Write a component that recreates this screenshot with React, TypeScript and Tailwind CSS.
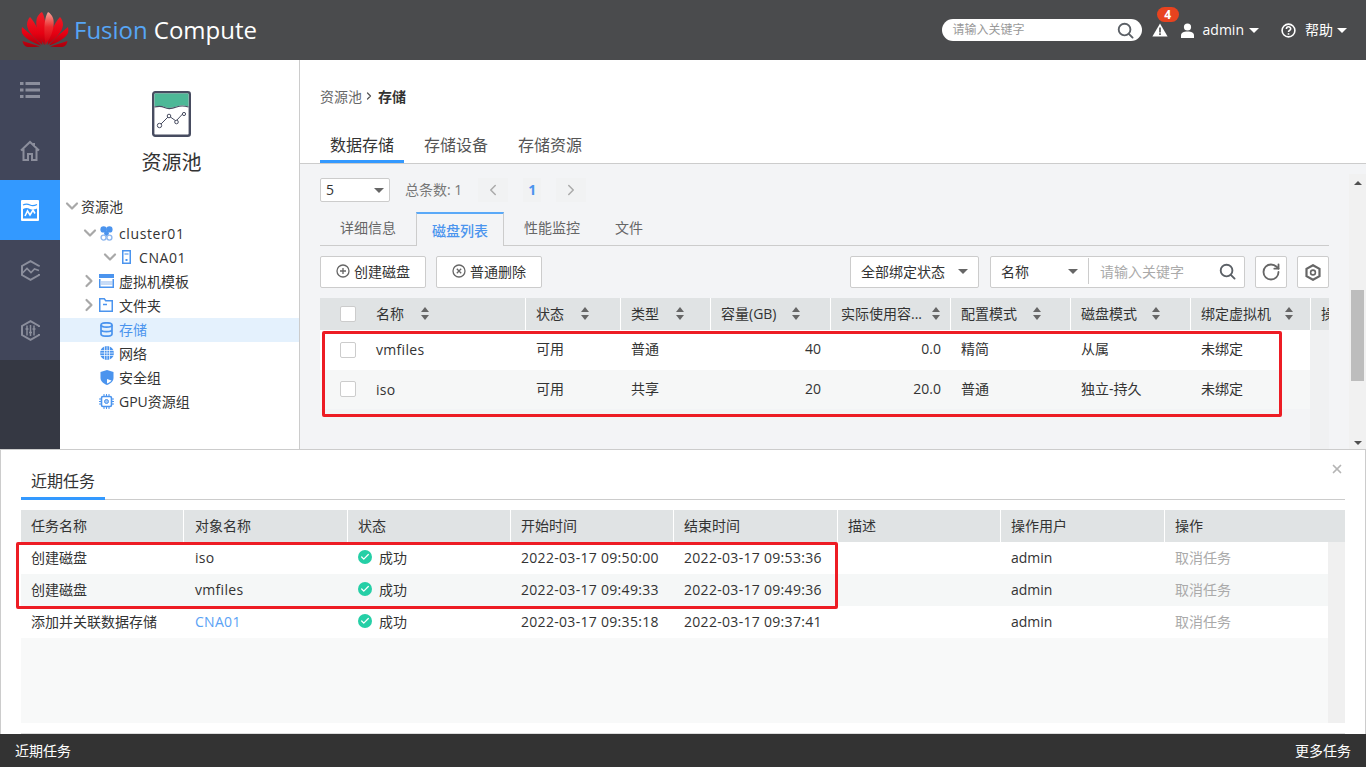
import type { ReactNode } from 'react';
import { Check, ChevronDown, ChevronLeft, ChevronRight, RotateCw, X } from 'lucide-react';

const font = "font-['Open_Sans','Noto_Sans_CJK_SC',sans-serif]";

function Caret({ className = 'border-t-[#666]' }: { className?: string }) {
  return <span className={`inline-block h-0 w-0 shrink-0 border-x-[5px] border-t-[5px] border-x-transparent ${className}`} />;
}

function SortIcon({ className = '' }: { className?: string }) {
  return (
    <span className={`flex shrink-0 flex-col gap-[3px] ${className}`}>
      <span className="h-0 w-0 border-x-[4px] border-b-[5px] border-x-transparent border-b-[#666]" />
      <span className="h-0 w-0 border-x-[4px] border-t-[5px] border-x-transparent border-t-[#666]" />
    </span>
  );
}

function SearchIcon({ color, size = 18 }: { color: string; size?: number }) {
  return (
    <svg width={size} height={size} viewBox="0 0 18 18" fill="none" stroke={color} strokeWidth="2">
      <circle cx="8" cy="8" r="6.2" />
      <path d="M12.5 12.5 16.5 16.5" strokeLinecap="round" />
    </svg>
  );
}

function HuaweiLogo() {
  const petals = [
    'M21.5 33 C14 27 6.5 20 6 13 C6 10 7 7 9 5 C14 10 20 22 21.5 33Z',
    'M20 33.5 C12 31 3 26 1 21 C0.5 19 0.5 17 1 15 C7 20 16 28 20 33.5Z',
    'M19 34.5 C13 35 7 35.5 5 34.5 C3.5 34 2 32 1.5 29 Q11 32 19 34.5Z',
  ];
  const inner = 'M23.5 33 C17 24 14.5 15 15.5 8 C16 4 19 1 21 0 C24 5 26 14 23.5 33Z';
  return (
    <svg width="48" height="36" viewBox="0 0 48 36">
      <defs>
        <linearGradient id="petal" gradientUnits="userSpaceOnUse" x1="0" y1="0" x2="0" y2="36">
          <stop offset="0" stopColor="#f0202a" />
          <stop offset="0.6" stopColor="#e60012" />
          <stop offset="1" stopColor="#a3000c" />
        </linearGradient>
        <linearGradient id="petalTop" gradientUnits="userSpaceOnUse" x1="0" y1="0" x2="0" y2="30">
          <stop offset="0" stopColor="#f7a498" />
          <stop offset="0.5" stopColor="#ec2a2e" />
          <stop offset="1" stopColor="#d6000f" />
        </linearGradient>
      </defs>
      {petals.map((d) => (
        <path key={d} d={d} fill="url(#petal)" />
      ))}
      <path d={inner} fill="url(#petal)" />
      <g transform="translate(48 0) scale(-1 1)">
        {petals.map((d) => (
          <path key={d} d={d} fill="url(#petal)" />
        ))}
        <path d={inner} fill="url(#petalTop)" />
      </g>
    </svg>
  );
}

function Header() {
  return (
    <header className="flex h-[60px] shrink-0 items-center bg-[#4a4b4d] pl-[21px] pr-[19px] text-white">
      <HuaweiLogo />
      <span className="ml-[5px] text-[24px] leading-none">
        <span className="text-[#56a5f5]">Fusion</span>
        <span className="ml-[6px]">Compute</span>
      </span>
      <div className="ml-auto flex h-[22px] w-[200px] items-center rounded-[11px] bg-white pl-[11px] pr-[8px]">
        <span className="text-[12px] text-[#999]">请输入关键字</span>
        <span className="ml-auto"><SearchIcon color="#5b6066" size={17} /></span>
      </div>
      <div className="relative ml-[10px] flex h-[20px] w-[16px] items-center justify-center">
        <svg width="16" height="14" viewBox="0 0 16 14">
          <path d="M8 0.5 15.6 13.5H0.4Z" fill="#fff" />
          <path d="M7.2 4.5h1.6v5H7.2zM7.2 10.3h1.6v1.6H7.2z" fill="#4a4b4d" />
        </svg>
        <span className="absolute -top-[13px] left-[5px] flex h-[15px] w-[22px] items-center justify-center rounded-full bg-[#e8431f] text-[12px] font-bold leading-none">4</span>
      </div>
      <svg className="ml-[12px]" width="15" height="15" viewBox="0 0 15 15" fill="#fff">
        <circle cx="7.5" cy="4" r="3.6" />
        <path d="M1 15v-2.4C1 10 3.5 8.6 7.5 8.6S14 10 14 12.6V15Z" />
      </svg>
      <span className="ml-[8px] pb-[2px] text-[14px]">admin</span>
      <Caret className="ml-[5px] border-t-white" />
      <svg className="ml-[22px]" width="15" height="15" viewBox="0 0 15 15" fill="none" stroke="#fff" strokeWidth="1.6">
        <circle cx="7.5" cy="7.5" r="6.4" />
        <path d="M5.4 6c0-3 4.3-2.8 4.3-.3 0 1.6-2.2 1.6-2.2 3.2" />
        <path d="M7.5 10.2v1.5" />
      </svg>
      <span className="ml-[9px] pb-[2px] text-[14px]">帮助</span>
      <Caret className="ml-[4px] border-t-white" />
    </header>
  );
}

function RailIcon({ name, color }: { name: string; color: string }) {
  if (name === 'list')
    return (
      <svg width="20" height="16" viewBox="0 0 20 16" fill={color}>
        <path d="M0 0h3.5v3H0zM5.5 0H20v3H5.5zM0 6.5h3.5v3H0zM5.5 6.5H20v3H5.5zM0 13h3.5v3H0zM5.5 13H20v3H5.5z" />
      </svg>
    );
  if (name === 'home')
    return (
      <svg width="20" height="21" viewBox="0 0 20 21" fill="none" stroke={color} strokeWidth="2">
        <path d="M1 10.5 10 2l9 8.5M3.5 9v11h4.5v-6h4v6h4.5V9M14 3v3" />
      </svg>
    );
  if (name === 'pool')
    return (
      <svg width="18" height="21" viewBox="0 0 18 21">
        <rect width="18" height="21" rx="1" fill="#fff" />
        <path d="M2 9c3-1.5 5-1 7 0s5 .5 7-.5V18.5H2Z" fill="#3399ff" />
        <path d="M2 5c3-1.5 5-1 7 0s5 .5 7-.5" fill="none" stroke="#3399ff" strokeWidth="1.2" />
        <path d="M4 16l2.5-5 2.5 4 3-5 2 3.5" fill="none" stroke="#fff" strokeWidth="1.6" />
      </svg>
    );
  if (name === 'hexwave')
    return (
      <svg width="19" height="21" viewBox="0 0 19 21" fill="none" stroke={color} strokeWidth="2">
        <path d="M18 6.5V6L9.5 1.2 1 6v9l8.5 4.8L18 15v-1" />
        <path d="M1.5 13 6 8.5l4 4 3.5-3.500 4.500 1.500" strokeWidth="1.7" />
      </svg>
    );
  return (
    <svg width="19" height="21" viewBox="0 0 19 21" fill="none" stroke={color} strokeWidth="2">
      <path d="M18 7V6L9.5 1.2 1 6v9l8.5 4.8L18 15v-1" />
      <path d="M6 5.5v10M9.5 5v11M13 5.5v10" strokeWidth="1.5" />
      <path d="M4.5 9h3M8 12.5h3M11.5 9h3" strokeWidth="1.3" />
    </svg>
  );
}

function Rail() {
  const items = ['list', 'home', 'pool', 'hexwave', 'hexbars'];
  return (
    <nav className="flex w-[60px] shrink-0 flex-col bg-[#353843]">
      {items.map((name) => (
        <div
          key={name}
          className={`flex h-[60px] items-center justify-center ${name === 'pool' ? 'bg-[#3399ff]' : 'bg-[#41465a]'}`}
        >
          <RailIcon name={name} color="#8b8e9c" />
        </div>
      ))}
    </nav>
  );
}

function PoolIllustration() {
  return (
    <svg width="39" height="46" viewBox="0 0 39 46">
      <rect x="1.2" y="1.2" width="36.6" height="43.6" rx="2" fill="#fff" stroke="#474c60" strokeWidth="2.4" />
      <path d="M2.5 2.5h34v13c-5-1.5-8-1.5-12 0s-9 2-12 .5-7-1-10-.5Z" fill="#4db897" />
      <path d="M2.5 16c4-1 7-1 10 .5s8 1 12-.5 7-1.5 12 0" fill="none" stroke="#474c60" strokeWidth="1.2" />
      <path d="M8 34l9-9 7 5 8-8.5" fill="none" stroke="#474c60" />
      <circle cx="7.5" cy="34.5" r="2.2" fill="#fff" stroke="#474c60" />
      <circle cx="17" cy="25" r="1.8" fill="#fff" stroke="#474c60" />
      <circle cx="24.5" cy="31" r="1.8" fill="#fff" stroke="#474c60" />
      <circle cx="32" cy="23" r="1.6" fill="#fff" stroke="#474c60" />
    </svg>
  );
}

function TreeIcon({ name }: { name: string }) {
  const c = '#4b94ee';
  switch (name) {
    case 'cluster':
      return (
        <svg width="13" height="15" viewBox="0 0 13 15" fill="none" stroke="#8fb8ee" strokeWidth="1.4">
          <circle cx="3.6" cy="3.4" r="3.2" fill={c} stroke="none" />
          <circle cx="9.4" cy="3.4" r="3.2" fill={c} stroke="none" />
          <circle cx="6.5" cy="7.5" r="2.4" fill={c} stroke="none" />
          <circle cx="3.6" cy="11.6" r="2.5" />
          <circle cx="9.4" cy="11.6" r="2.5" />
        </svg>
      );
    case 'host':
      return (
        <svg width="9" height="14" viewBox="0 0 9 14">
          <rect x="0.75" y="0.75" width="7.5" height="12.5" fill="#fff" stroke={c} strokeWidth="1.5" />
          <rect x="2.5" y="3" width="4" height="2" fill="#9cc4f4" />
          <rect x="3.5" y="9" width="2" height="2" fill={c} />
        </svg>
      );
    case 'template':
      return (
        <svg width="15" height="14" viewBox="0 0 15 14">
          <rect width="15" height="4" fill={c} />
          <path d="M.75 5v8.25h13.5V5" fill="none" stroke={c} strokeWidth="1.5" />
          <path d="M3 7v4M5 7v4M7 7v4M9 7v4M11 7v4M13 7v4" stroke="#8fb8ee" />
        </svg>
      );
    case 'folder':
      return (
        <svg width="14" height="14" viewBox="0 0 14 14" fill="none" stroke={c} strokeWidth="1.5">
          <path d="M.75 .75h4.5l1.5 2h6.5v10.5H.75Z" />
          <path d="M4 6.5h4" />
        </svg>
      );
    case 'storage':
      return (
        <svg width="13" height="15" viewBox="0 0 13 15" fill="none" stroke={c} strokeWidth="1.7">
          <ellipse cx="6.5" cy="3" rx="5.5" ry="2.2" />
          <path d="M1 3v9c0 1.2 2.5 2.2 5.5 2.2S12 13.2 12 12V3M1 7.5c0 1.2 2.5 2.2 5.5 2.2S12 8.700 12 7.500" />
        </svg>
      );
    case 'network':
      return (
        <svg width="14" height="14" viewBox="0 0 14 14" fill="none" stroke="#fff" strokeWidth="0.7">
          <circle cx="7" cy="7" r="7" fill={c} stroke="none" />
          <path d="M0 4.5h14M0 7h14M0 9.5h14M4.5 0v14M7 0v14M9.5 0v14" />
        </svg>
      );
    case 'shield':
      return (
        <svg width="14" height="15" viewBox="0 0 14 15">
          <path d="M7 0 13.5 2v6c0 3.5-3 5.5-6.5 7C3.5 13.5.5 11.5.5 8V2Z" fill={c} />
          <path d="M7 4.5V9l4.5 1.5c-1 1.2-2.7 2.3-4.5 3Z" fill="#fff" />
        </svg>
      );
    default:
      return (
        <svg width="15" height="15" viewBox="0 0 15 15" fill="none" stroke={c}>
          <rect x="2.5" y="2.5" width="10" height="10" rx="1.5" fill="#fff" strokeWidth="1.6" />
          <circle cx="7.5" cy="7.5" r="2" fill="#9cc4f4" />
          <path d="M5 0v2M7.5 0v2M10 0v2M5 13v2M7.5 13v2M10 13v2M0 5h2M0 7.5h2M0 10h2M13 5h2M13 7.5h2M13 10h2" />
        </svg>
      );
  }
}

function TreeArrow({ open }: { open: boolean }) {
  const Icon = open ? ChevronDown : ChevronRight;
  return (
    <span className="flex w-[14px] shrink-0 justify-center">
      <Icon size={20} strokeWidth={2.6} className="shrink-0 text-[#a8a8a8]" />
    </span>
  );
}

const treeRows = [
  { label: 'cluster01', icon: 'cluster', open: true, pad: 'pl-[23px]', iconGap: 'ml-[3px]', gap: 'ml-[6px] tracking-[0.6px]' },
  { label: 'CNA01', icon: 'host', open: true, pad: 'pl-[43px]', iconGap: 'ml-[5px]', gap: 'ml-[8px] tracking-[0.6px]' },
  { label: '虚拟机模板', icon: 'template', open: false, pad: 'pl-[22px]', iconGap: 'ml-[3px]', gap: 'ml-[5px]' },
  { label: '文件夹', icon: 'folder', open: false, pad: 'pl-[22px]', iconGap: 'ml-[3px]', gap: 'ml-[6px]' },
  { label: '存储', icon: 'storage', pad: 'pl-[40px]', gap: 'ml-[6px]', active: true },
  { label: '网络', icon: 'network', pad: 'pl-[40px]', gap: 'ml-[5px]' },
  { label: '安全组', icon: 'shield', pad: 'pl-[40px]', gap: 'ml-[5px]' },
  { label: 'GPU资源组', icon: 'gpu', pad: 'pl-[39px]', gap: 'ml-[5px]' },
];

function TreePanel() {
  return (
    <aside className="flex w-[240px] shrink-0 flex-col border-r border-[#ccc] bg-white text-[14px] text-[#333]">
      <div className="flex flex-col items-center pr-[16px] pt-[31px]">
        <PoolIllustration />
        <div className="mt-[12px] text-[20px] leading-[28px]">资源池</div>
      </div>
      <div className="mt-[17px] flex h-[28px] items-center pb-[4px] pl-[5px]">
        <TreeArrow open />
        <span className="ml-[2px]">资源池</span>
      </div>
      {treeRows.map((row) => (
        <div key={row.label} className={`flex h-[24px] items-center pb-[2px] ${row.pad} ${row.active ? 'bg-[#e4f1fd] text-[#4b94ee]' : ''}`}>
          {row.open !== undefined && <TreeArrow open={row.open} />}
          <span className={`flex ${row.iconGap ?? ''}`}>
            <TreeIcon name={row.icon} />
          </span>
          <span className={row.gap}>{row.label}</span>
        </div>
      ))}
    </aside>
  );
}

function Toolbutton({ children, className = 'justify-center' }: { children: ReactNode; className?: string }) {
  return (
    <div className={`flex h-[32px] items-center rounded-[2px] border border-[#ccc] bg-white ${className}`}>
      {children}
    </div>
  );
}

const diskCols = [
  { label: '状态', w: 'w-[95px]', sort: 'ml-[17px]' },
  { label: '类型', w: 'w-[90px]', sort: 'ml-[17px]' },
  { label: '容量(GB)', w: 'w-[120px]', sort: 'ml-[16px]' },
  { label: '实际使用容...', w: 'w-[120px]', sort: 'ml-[10px]' },
  { label: '配置模式', w: 'w-[120px]', sort: 'ml-[16px]' },
  { label: '磁盘模式', w: 'w-[120px]', sort: 'ml-[15px]' },
  { label: '绑定虚拟机', w: 'w-[120px]', sort: 'ml-[14px]' },
];

const diskRows = [
  { name: 'vmfiles', state: '可用', type: '普通', cap: '40', used: '0.0', conf: '精简', mode: '从属', bind: '未绑定' },
  { name: 'iso', state: '可用', type: '共享', cap: '20', used: '20.0', conf: '普通', mode: '独立-持久', bind: '未绑定' },
];

function Checkbox() {
  return <span className="h-[16px] w-[16px] shrink-0 rounded-[2px] border border-[#ccc] bg-white" />;
}

function DiskTable() {
  return (
    <div className="relative mt-[10px] w-[1009px] flex-1 overflow-hidden">
      <div className="flex h-[32px] bg-[#e0e3e4]">
        <div className="flex w-[205px] shrink-0 items-center pl-[20px]">
          <Checkbox />
          <span className="ml-[20px] pb-[2px]">名称</span>
          <SortIcon className="mb-[2px] ml-[17px]" />
        </div>
        {diskCols.map((c) => (
          <div key={c.label} className={`flex ${c.w} shrink-0 items-center border-l border-white pb-[2px] pl-[10px]`}>
            <span className="whitespace-nowrap">{c.label}</span>
            <SortIcon className={c.sort} />
          </div>
        ))}
        <div className="flex w-[19px] shrink-0 items-center overflow-hidden whitespace-nowrap border-l border-white pb-[2px] pl-[10px]">操作</div>
      </div>
      <div className="flex">
        <div className="w-[990px] shrink-0">
          {diskRows.map((r, i) => (
            <div key={r.name} className={`flex h-[39.5px] items-center ${i === 1 ? 'bg-[#f6f7f7]' : 'bg-white'}`}>
              <div className="flex w-[205px] shrink-0 items-center pl-[20px]">
                <Checkbox />
                <span className="ml-[20px] tracking-[0.3px]">{r.name}</span>
              </div>
              <div className="w-[95px] shrink-0 pb-[2px] pl-[11px]">{r.state}</div>
              <div className="w-[90px] shrink-0 pb-[2px] pl-[11px]">{r.type}</div>
              <div className="w-[120px] shrink-0 pb-[2px] pr-[9px] text-right">{r.cap}</div>
              <div className="w-[120px] shrink-0 pb-[2px] pr-[9px] text-right">{r.used}</div>
              <div className="w-[120px] shrink-0 pb-[2px] pl-[11px]">{r.conf}</div>
              <div className="w-[120px] shrink-0 pb-[2px] pl-[11px]">{r.mode}</div>
              <div className="w-[110px] shrink-0 pb-[2px] pl-[11px]">{r.bind}</div>
            </div>
          ))}
        </div>
        <div className="h-[119px] flex-1 bg-[#f0f1f2]" />
      </div>
      <div className="absolute left-[2px] top-[33px] h-[86px] w-[960px] rounded-[2px] border-[3px] border-[#ed1c24]" />
    </div>
  );
}

function MainPanel() {
  return (
    <main className="flex min-w-0 flex-1 flex-col bg-white text-[14px] text-[#333]">
      <div className="flex h-[104px] shrink-0 flex-col border-b border-[#ccc] px-[20px]">
        <div className="mt-[27px] flex h-[18px] items-center">
          <span className="text-[#666]">资源池</span>
          <ChevronRight size={12} strokeWidth={2.5} className="ml-[1px] mr-[3px] text-[#555]" />
          <span className="font-bold">存储</span>
        </div>
        <div className="mt-auto flex gap-[10px] text-[16px]">
          <div className="flex h-[34px] w-[84px] items-center justify-center border-b-[3px] border-[#3399ff]">数据存储</div>
          <div className="flex h-[34px] w-[84px] items-center justify-center border-b-[3px] border-transparent text-[#555]">存储设备</div>
          <div className="flex h-[34px] w-[84px] items-center justify-center border-b-[3px] border-transparent text-[#555]">存储资源</div>
        </div>
      </div>
      <div className="flex min-h-0 flex-1 bg-[#f3f4f6]">
        <div className="flex min-w-0 flex-1 flex-col pl-[20px]">
          <div className="mt-[14px] flex h-[24px] items-center">
            <div className="flex h-[24px] w-[70px] items-center justify-between rounded-[2px] border border-[#ccc] bg-white pb-[2px] pl-[5px] pr-[5px]">
              5<Caret className="mt-[2px] border-t-[#666]" />
            </div>
            <span className="ml-[15px] pb-[2px] text-[#777]">总条数: 1</span>
            <span className="ml-[16px] flex h-[24px] w-[30px] items-center justify-center bg-[#f1f2f3]"><ChevronLeft size={18} className="text-[#aaa]" /></span>
            <span className="ml-[15px] flex h-[24px] w-[18px] items-center justify-center bg-[#f1f2f3] pb-[2px] font-bold text-[#4b94ee]">1</span>
            <span className="ml-[15px] flex h-[24px] w-[30px] items-center justify-center bg-[#f1f2f3]"><ChevronRight size={18} className="text-[#aaa]" /></span>
          </div>
          <div className="mt-[10px] flex h-[34px] w-[1009px] border-b border-[#ccc] text-[#666]">
            <div className="flex h-[33px] w-[96px] items-center justify-center pb-[2px]">详细信息</div>
            <div className="flex h-[34px] w-[88px] items-center justify-center border-x border-t-[2px] border-x-[#ccc] border-t-[#5aa9f8] bg-[#f3f4f6] pt-[1px] font-medium text-[#4b94ee]">磁盘列表</div>
            <div className="flex h-[33px] items-center pb-[2px] pl-[20px]">性能监控</div>
            <div className="ml-[35px] flex h-[33px] items-center pb-[2px]">文件</div>
          </div>
          <div className="mt-[10px] flex w-[1009px] items-center">
            <Toolbutton className="w-[106px] justify-center pb-[2px]">
              <svg width="14" height="14" viewBox="0 0 14 14" fill="none" stroke="#666" strokeWidth="1.3"><circle cx="7" cy="7" r="6" /><path d="M4 7h6M7 4v6" /></svg>
              <span className="ml-[4px]">创建磁盘</span>
            </Toolbutton>
            <Toolbutton className="ml-[10px] w-[106px] justify-center pb-[2px]">
              <svg width="14" height="14" viewBox="0 0 14 14" fill="none" stroke="#666" strokeWidth="1.3"><circle cx="7" cy="7" r="6" /><path d="M4.8 4.8l4.4 4.4M9.2 4.8l-4.4 4.4" /></svg>
              <span className="ml-[4px]">普通删除</span>
            </Toolbutton>
            <Toolbutton className="ml-auto w-[129px] justify-between pb-[2px] pl-[10px] pr-[10px]">
              <span className="whitespace-nowrap">全部绑定状态</span>
              <Caret />
            </Toolbutton>
            <Toolbutton className="ml-[11px] w-[255px] pb-[2px] pl-[10px] pr-[8px]">
              <span className="w-[67px] shrink-0">名称</span>
              <Caret />
              <span className="ml-[10px] h-[26px] border-l border-[#ccc]" />
              <span className="ml-[11px] whitespace-nowrap text-[#aaa]">请输入关键字</span>
              <span className="ml-auto"><SearchIcon color="#5b6066" size={17} /></span>
            </Toolbutton>
            <Toolbutton className="ml-[10px] w-[32px] justify-center"><RotateCw size={20} strokeWidth={2.2} className="text-[#666]" /></Toolbutton>
            <Toolbutton className="ml-[10px] w-[32px] justify-center">
              <svg width="16" height="17" viewBox="0 0 16 17" fill="none" stroke="#666"><path d="M8 1.2 14.5 4.8v7.4L8 15.8l-6.5-3.600V4.800Z" strokeWidth="2.2" /><circle cx="8" cy="8.5" r="2.4" strokeWidth="1.6" /></svg>
            </Toolbutton>
          </div>
          <DiskTable />
        </div>
        <div className="mt-[10px] flex w-[17px] shrink-0 flex-col items-center bg-[#f1f1f1] pb-[4px] pt-[7px]">
          <span className="h-0 w-0 border-x-[4px] border-b-[4px] border-x-transparent border-b-[#505050]" />
          <span className="mt-[105px] h-[91px] w-[13px] bg-[#bdbdbd]" />
          <span className="mt-auto h-0 w-0 border-x-[4px] border-t-[4px] border-x-transparent border-t-[#505050]" />
        </div>
      </div>
    </main>
  );
}

const taskWidths = ['w-[162px]', 'w-[164px]', 'w-[163px]', 'w-[163px]', 'w-[164px]', 'w-[163px]', 'w-[164px]'];
const taskCols = ['任务名称', '对象名称', '状态', '开始时间', '结束时间', '描述', '操作用户', '操作'];

const taskRows = [
  { task: '创建磁盘', obj: 'iso', start: '2022-03-17 09:50:00', end: '2022-03-17 09:53:36' },
  { task: '创建磁盘', obj: 'vmfiles', start: '2022-03-17 09:49:33', end: '2022-03-17 09:49:36' },
  { task: '添加并关联数据存储', obj: 'CNA01', start: '2022-03-17 09:35:18', end: '2022-03-17 09:37:41', link: true },
];

function TasksPanel() {
  return (
    <section className="relative flex h-[285px] shrink-0 flex-col border-x border-t border-[#ccc] bg-white px-[20px] text-[14px] text-[#333]">
      <X size={14} strokeWidth={3} className="absolute right-[21px] top-[12px] text-[#b5b5b5]" />
      <div className="h-[50px] shrink-0 border-b border-[#ccc]">
        <div className="mt-[15px] flex h-[35px] w-[84px] items-center justify-center border-b-[3px] border-[#3399ff] text-[16px]">近期任务</div>
      </div>
      <div className="relative mt-[10px] flex-1 border-b border-[#ddd] pb-[10px]">
        <div className="flex h-[32px] bg-[#e0e3e4]">
          {taskCols.map((label, i) => (
            <div key={label} className={`flex items-center pb-[2px] ${taskWidths[i] ?? 'flex-1'} ${i === 1 ? 'border-l border-white pl-[11px]' : i > 0 ? 'border-l border-white pl-[10px]' : 'pl-[10px]'}`}>{label}</div>
          ))}
        </div>
        <div className="flex h-[181px]">
          <div className="flex-1 bg-[#f8f9f9]">
            {taskRows.map((r, i) => (
              <div key={r.start} className={`flex h-[32px] items-center pb-[2px] ${i === 1 ? 'bg-[#f5f7f7]' : 'bg-white'}`}>
                <div className="w-[162px] pl-[10px]">{r.task}</div>
                <div className={`w-[164px] pl-[12px] tracking-[0.3px] ${r.link ? 'text-[#5aa2f5]' : ''}`}>{r.obj}</div>
                <div className="flex w-[163px] items-center pl-[11px]">
                  <span className="flex h-[14px] w-[14px] items-center justify-center rounded-full bg-[#25cfa6]">
                    <Check size={10} strokeWidth={3} className="text-white" />
                  </span>
                  <span className="ml-[7px]">成功</span>
                </div>
                <div className="w-[163px] whitespace-nowrap pl-[11px] tracking-[0.3px]">{r.start}</div>
                <div className="w-[164px] whitespace-nowrap pl-[11px] tracking-[0.3px]">{r.end}</div>
                <div className="w-[163px]" />
                <div className="w-[164px] pl-[11px]">admin</div>
                <div className="pl-[11px] text-[#aaa]">取消任务</div>
              </div>
            ))}
          </div>
          <div className="w-[17px] shrink-0 bg-[#f0f0f0]" />
        </div>
        <div className="absolute left-[-5px] top-[32px] h-[67px] w-[822px] rounded-[2px] border-[3px] border-[#ed1c24]" />
      </div>
    </section>
  );
}

export default function App() {
  return (
    <div className={`flex h-[767px] w-[1366px] flex-col overflow-hidden ${font}`}>
      <Header />
      <div className="flex h-[389px] shrink-0">
        <Rail />
        <TreePanel />
        <MainPanel />
      </div>
      <TasksPanel />
      <footer className="flex h-[33px] shrink-0 items-center justify-between bg-[#333] px-[15px] text-[14px] text-white">
        <span>近期任务</span>
        <span>更多任务</span>
      </footer>
    </div>
  );
}
